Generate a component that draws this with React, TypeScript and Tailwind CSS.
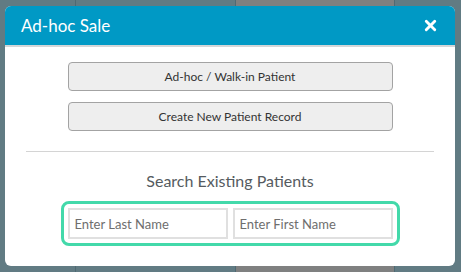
import { X } from "lucide-react";

export default function App() {
  return (
    <div className="relative h-[272px] w-[461px] overflow-hidden bg-[#617b83] font-['Lato',sans-serif]">
      {/* page behind the modal */}
      <div className="flex h-full">
        <div className="w-[76px] border-r border-[#4f6a73]" />
        <div className="w-[160px] border-r border-[#4f6a73]" />
        <div className="w-[159px] border-r border-[#4f6a73] bg-[#7f8080]" />
        <div className="flex-1" />
      </div>

      <div className="absolute left-[5px] top-[6px] flex h-[260px] w-[450px] flex-col overflow-hidden rounded-[6px] bg-white">
        <div className="flex h-[41px] items-center justify-between border-b-2 border-[#d3d6d8] bg-[#0099c5] pl-[16px] pr-[16px]">
          <span className="text-[17px] text-white">Ad-hoc Sale</span>
          <X size={17} strokeWidth={4} className="text-white" />
        </div>

        <div className="flex flex-col items-center px-[21px] pt-[15px]">
          <button className="h-[29px] w-[325px] rounded-[4px] border border-[#a3a3a3] bg-[#eeeeee] text-[12px] text-[#333]">
            Ad-hoc / Walk-in Patient
          </button>
          <button className="mt-[11px] h-[29px] w-[325px] rounded-[4px] border border-[#a3a3a3] bg-[#eeeeee] text-[12px] text-[#333]">
            Create New Patient Record
          </button>
          <div className="mt-[20px] h-px w-full bg-[#d4d4d4]" />
          <div className="mt-[17px] text-[16px] text-[#555b60]">Search Existing Patients</div>
          <div className="mt-[8px] flex gap-[5px] rounded-[8px] border-[3px] border-[#43d9aa] p-[4px]">
            <input
              placeholder="Enter Last Name"
              className="h-[31px] w-[160px] border-2 border-[#e0e0e0] px-[5px] text-[13px] text-[#333] placeholder:text-[#6e6e6e] focus:outline-none"
            />
            <input
              placeholder="Enter First Name"
              className="h-[31px] w-[160px] border-2 border-[#e0e0e0] px-[5px] text-[13px] text-[#333] placeholder:text-[#6e6e6e] focus:outline-none"
            />
          </div>
        </div>
      </div>
    </div>
  );
}
